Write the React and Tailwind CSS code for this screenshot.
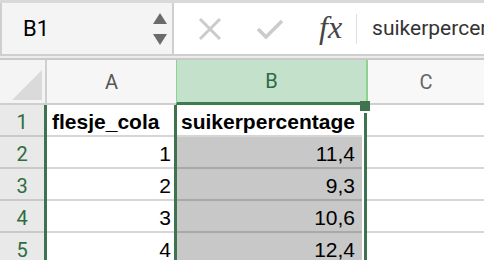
const rows = [
    { n: 1, a: "flesje_cola", b: "suikerpercentage", head: true },
    { n: 2, a: "1", b: "11,4" },
    { n: 3, a: "2", b: "9,3" },
    { n: 4, a: "3", b: "10,6" },
    { n: 5, a: "4", b: "12,4" },
]

const App = () => {
    return (
        <div className="w-[484px] h-[260px] overflow-hidden bg-white font-['Liberation_Sans',sans-serif] relative">
            {/* formula bar */}
            <div className="h-[56px] border-t-[3px] border-[#d9d9d9] flex bg-white">
                <div className="w-[174px] shrink-0 h-[53px] flex items-center justify-between pl-[21px] pr-[5px] bg-[#f4f4f4] border-l-[2px] border-r-[2px] border-b-[2px] border-[#cfcfcf]">
                    <span className="text-[22px] text-black font-['Roboto',sans-serif]">B1</span>
                    <div className="flex flex-col gap-[10px] items-center">
                        <svg width="14" height="11" viewBox="0 0 14 11"><path d="M7 0 L14 11 L0 11 Z" fill="#6b6b6b" /></svg>
                        <svg width="14" height="11" viewBox="0 0 14 11"><path d="M0 0 L14 0 L7 11 Z" fill="#6b6b6b" /></svg>
                    </div>
                </div>
                <div className="flex-1 min-w-0 overflow-hidden flex items-center border-b-[2px] border-[#cfcfcf]">
                    <svg className="ml-[24px] shrink-0" width="24" height="24" viewBox="0 0 24 24"><path d="M2 2 L22 22 M22 2 L2 22" stroke="#cbcbcb" strokeWidth="3" /></svg>
                    <svg className="ml-[34px] shrink-0" width="28" height="22" viewBox="0 0 28 22"><path d="M2 11 L10 19 L26 3" stroke="#cbcbcb" strokeWidth="3.5" fill="none" /></svg>
                    <span className="ml-[35px] shrink-0 text-[32px] italic text-[#454545] font-['Liberation_Serif',serif] leading-none pb-[3px]">fx</span>
                    <div className="ml-[14px] shrink-0 w-[1px] h-[30px] bg-[#dedede]" />
                    <span className="ml-[15px] shrink-0 text-[21px] text-[#333] font-['Roboto',sans-serif] whitespace-nowrap">suikerpercentage</span>
                </div>
            </div>
            <div className="h-[4px] bg-[#ececec] border-b-[2px] border-[#c9c9c9]" />

            {/* column headers */}
            <div className="flex h-[45px] font-['Roboto',sans-serif] text-[20px]">
                <div className="w-[47px] bg-[#f4f4f4] border-r-[2px] border-b-[2px] border-[#cfcfcf] flex items-end justify-end p-[3px]">
                    <svg width="30" height="30" viewBox="0 0 30 30"><path d="M30 0 L30 30 L0 30 Z" fill="#dadada" /></svg>
                </div>
                <div className="w-[129px] bg-[#f6f6f6] border-b-[2px] border-[#cfcfcf] flex items-center justify-center text-[#555]">A</div>
                <div className="w-[190px] bg-[#c3e1cb] border-l-[1px] border-[#8fd18f] border-b-[3px] border-b-[#3d7a4e] flex items-center justify-center text-[#2e6b3f]">B</div>
                <div className="flex-1 bg-[#f8f8f8] border-l-[2px] border-[#8fd18f] border-b-[2px] border-b-[#cfcfcf] flex items-center justify-center text-[#666]">C</div>
            </div>

            {/* rows */}
            {rows.map((r) => (
                <div key={r.n} className="flex h-[32px] text-[21px]">
                    <div className="w-[44px] bg-[#e9e9e9] border-b-[2px] border-[#c9c9c9] flex items-center justify-center pt-[4px] text-[#2f6d3f] font-['Roboto',sans-serif] text-[20px]">{r.n}</div>
                    <div className="w-[133px] border-x-[3px] border-[#3f7350]">
                        <div className={`h-full border-b-[2px] border-[#d6d6d6] flex items-center pt-[4px] pr-[3px] text-black ${r.head ? "font-bold justify-start pl-[5px]" : "justify-end"}`}>{r.a}</div>
                    </div>
                    <div className="w-[190px] border-r-[3px] border-[#3f7350] pr-[2px]">
                        <div className={`h-full flex items-center pt-[4px] text-black ${r.head ? "font-bold justify-start pl-[4px] bg-white border-b-[2px] border-[#d6d6d6]" : "justify-end pr-[7px] bg-[#c8c8c8] border-b-[2px] border-[#a9a9a9]"}`}>{r.b}</div>
                    </div>
                    <div className="flex-1 border-b-[2px] border-[#d6d6d6]" />
                </div>
            ))}

            {/* fill handle */}
            <div className="absolute left-[360px] top-[101px] w-[10px] h-[12px] bg-[#3f7350] border-b-[2px] border-white" />
        </div>
    )
}

export default App
